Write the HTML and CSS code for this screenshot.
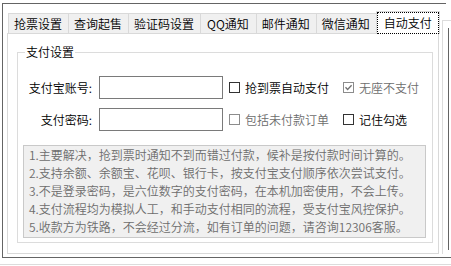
FILE: index.html
```html
<!DOCTYPE html>
<html lang="zh-CN">
<head>
<meta charset="utf-8">
<title>自动支付</title>
<link rel="stylesheet" href="styles.css">
</head>
<body>
<div class="frame">
  <div class="topline"></div>
  <div class="main">
    <div class="tabctl">
      <div class="tabstrip">
        <div class="tab">抢票设置</div>
        <div class="tab">查询起售</div>
        <div class="tab">验证码设置</div>
        <div class="tab tab-qq">QQ通知</div>
        <div class="tab">邮件通知</div>
        <div class="tab">微信通知</div>
        <div class="tab active"><span class="focus">自动支付</span></div>
      </div>
      <div class="page">
        <fieldset class="group">
          <legend class="group-title">支付设置</legend>
          <div class="form-row first">
            <span class="lbl">支付宝账号:</span>
            <span class="input"></span>
            <span class="chk"><span class="box"></span><span class="chk-text">抢到票自动支付</span></span>
            <span class="chk disabled"><span class="box"><svg class="tick" viewBox="0 0 9 9" width="9" height="9"><path d="M1.5 4.3 L3.6 6.5 L7.6 2.2" fill="none" stroke="#707070" stroke-width="1.3"/></svg></span><span class="chk-text">无座不支付</span></span>
          </div>
          <div class="form-row">
            <span class="lbl">支付密码:</span>
            <span class="input"></span>
            <span class="chk disabled"><span class="box"></span><span class="chk-text">包括未付款订单</span></span>
            <span class="chk"><span class="box"></span><span class="chk-text">记住勾选</span></span>
          </div>
          <div class="notes">
            <div>1.主要解决，抢到票时通知不到而错过付款，候补是按付款时间计算的。</div>
            <div>2.支持余额、余额宝、花呗、银行卡，按支付宝支付顺序依次尝试支付。</div>
            <div>3.不是登录密码，是六位数字的支付密码，在本机加密使用，不会上传。</div>
            <div>4.支付流程均为模拟人工，和手动支付相同的流程，受支付宝风控保护。</div>
            <div>5.收款方为铁路，不会经过分流，如有订单的问题，请咨询12306客服。</div>
          </div>
        </fieldset>
      </div>
    </div>
    <div class="side"><div class="side-inner"></div></div>
  </div>
</div>
<div class="bottomline"></div>
</body>
</html>
```

FILE: styles.css
```css
* { box-sizing: border-box; }
html, body { margin: 0; padding: 0; background: #ffffff; }
body {
  font-family: "Noto Sans CJK SC", "Microsoft YaHei", sans-serif;
  font-size: 12px;
  font-weight: 350;
  color: #000;
  width: 451px;
  height: 266px;
  overflow: hidden;
}

.frame {
  margin: 3px 0 0 2px;
  border-left: 1px solid #646464;
  border-bottom: 1px solid #646464;
}
.topline {
  width: 443px;
  height: 0;
  border-top: 1px solid #646464;
}
.main {
  display: flex;
  align-items: flex-start;
}

.tabctl {
  margin: 0 0 3px 4px;
  width: 432px;
  flex: none;
}
.tabstrip {
  display: flex;
  align-items: flex-end;
  height: 29px;
  padding-left: 2px;
}
.tab {
  height: 20px;
  line-height: 19px;
  margin-left: -1px;
  padding: 0 6px 0 5px;
  background: #f0f0f0;
  border: 1px solid #d9d9d9;
  border-bottom: none;
  white-space: nowrap;
  flex: none;
}
.tab-qq { padding: 0 7px 0 6px; }
.tab.active {
  position: relative;
  z-index: 1;
  height: 23px;
  margin-bottom: -1px;
  padding: 0;
  background: #ffffff;
}
.focus {
  display: block;
  width: 62px;
  height: 22px;
  line-height: 19px;
  text-align: center;
  border: 1px dotted #000;
}

.page {
  border: 1px solid #d9d9d9;
  height: 221px;
  padding: 10px 5px 0 9px;
  background: #fff;
}

.group {
  margin: 0;
  padding: 0 6px 4px 5px;
  border: 1px solid #dcdcdc;
  height: 199px;
  min-width: 0;
}
.group-title {
  padding: 0 1px;
  line-height: 16px;
  margin-left: 2px;
}

.form-row {
  display: flex;
  align-items: center;
  height: 23px;
  margin: 9px 0 0 -5px;
}
.form-row.first { margin-top: 16px; }
.lbl {
  flex: none;
  width: 74px;
  text-align: right;
  white-space: nowrap;
  line-height: 16px;
}
.input {
  flex: none;
  width: 124px;
  height: 23px;
  margin-left: 7px;
  border: 1px solid #7a7a7a;
  background: #fff;
}
.chk {
  flex: none;
  display: flex;
  align-items: center;
  width: 114px;
  white-space: nowrap;
}
.input + .chk { margin-left: 6px; }
.box {
  width: 11px;
  height: 11px;
  border: 1px solid #333;
  background: #fff;
  display: flex;
  align-items: center;
  justify-content: center;
  flex: none;
}
.chk-text {
  margin-left: 5px;
  line-height: 16px;
}
.chk.disabled .box { border-color: #8c8c8c; }
.chk.disabled .chk-text { color: #6d6d6d; }
.tick { display: block; }

.notes {
  margin-top: 14px;
  height: 93px;
  border: 1px solid #c9c9c9;
  background: #f0f0f0;
  color: #6d6d6d;
  padding: 0 0 0 5px;
  line-height: 18px;
  white-space: nowrap;
  overflow: hidden;
}

.side {
  flex: 1;
  margin: 16px 0 0 3px;
  height: 234px;
  border-left: 1px solid #dcdcdc;
  border-top: 1px solid #dcdcdc;
}
.side-inner {
  margin: 7px 0 0 5px;
  height: 222px;
  border-left: 1px solid #646464;
}

.bottomline {
  margin-top: 6px;
  border-top: 1px solid #dcdcdc;
}
```
